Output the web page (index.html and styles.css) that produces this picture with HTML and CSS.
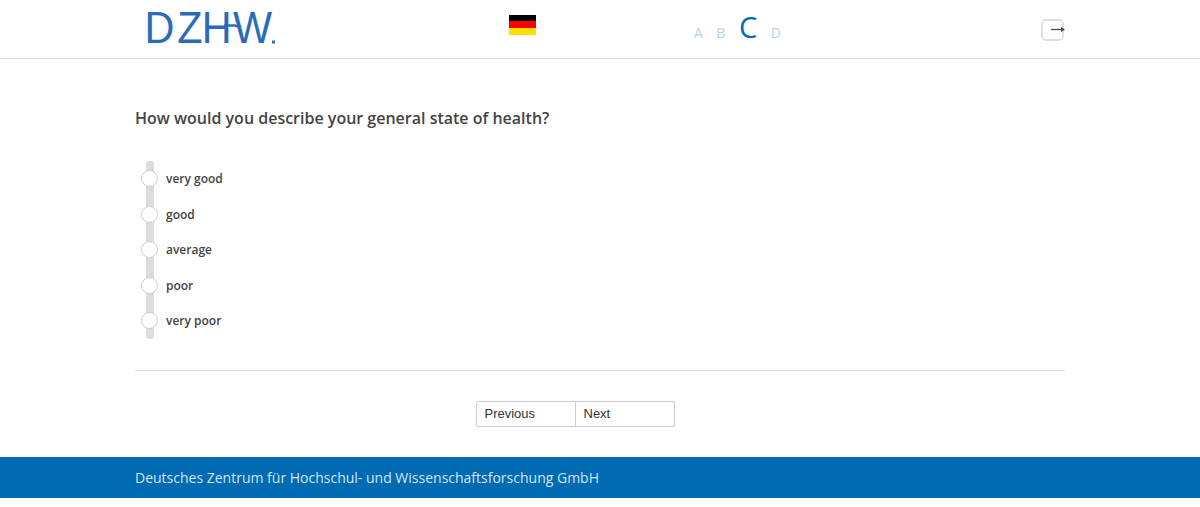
FILE: index.html
```html
<!DOCTYPE html>
<html>
<head>
  <meta charset="UTF-8">
  <title>DZHW</title>
  <link rel="stylesheet" href="styles.css">
</head>
<body>
  <header class="header">
    <div class="header-inner">
      <svg class="logo" width="140" height="58" viewBox="0 0 140 58">
        <text class="logo-text" transform="scale(.92 1)" x="4.8 40.4 67 101" y="43.5">DZHW</text>
        <path d="M84 25.5h11l6 2" fill="none" stroke="#2b6cb8" stroke-width="2.6"/>
        <rect x="132" y="40.5" width="3" height="3" fill="#2b6cb8"/>
      </svg>
      <div class="flag">
        <span class="flag-black"></span>
        <span class="flag-red"></span>
        <span class="flag-gold"></span>
      </div>
      <div class="sizes">
        <span class="size">A</span>
        <span class="size">B</span>
        <span class="size size-active">C</span>
        <span class="size">D</span>
      </div>
      <svg class="logout" width="26" height="22" viewBox="0 0 26 22">
        <rect x="3" y="1" width="21" height="20" rx="4" fill="none" stroke="#d4d4d4" stroke-width="1.4"/>
        <path d="M12 10.5h11" stroke="#444" stroke-width="1.2"/>
        <path d="M22 8l4 2.5-4 2.5z" fill="#444"/>
      </svg>
    </div>
  </header>

  <main class="content">
    <h1 class="question">How would you describe your general state of health?</h1>
    <div class="answers">
      <div class="track"></div>
      <label class="answer"><span class="radio"></span>very good</label>
      <label class="answer"><span class="radio"></span>good</label>
      <label class="answer"><span class="radio"></span>average</label>
      <label class="answer"><span class="radio"></span>poor</label>
      <label class="answer"><span class="radio"></span>very poor</label>
    </div>
    <div class="buttons">
      <button class="btn btn-prev" type="button">Previous</button>
      <button class="btn btn-next" type="button">Next</button>
    </div>
  </main>

  <footer class="footer">
    <div class="footer-inner">Deutsches Zentrum für Hochschul- und Wissenschaftsforschung GmbH</div>
  </footer>
</body>
</html>
```

FILE: styles.css
```css
body {
  margin: 0;
  background-color: #fff;
  color: #444;
  font-family: "Open Sans", sans-serif;
}

.header {
  height: 58px;
  border-bottom: 1px solid #ddd;
}

.header-inner {
  width: 930px;
  height: 58px;
  margin: 0 auto;
  display: flex;
  align-items: flex-start;
}

.logo {
  margin-left: 5px;
  flex: none;
}

.logo-text {
  font-family: "Liberation Sans", sans-serif;
  font-size: 45px;
  fill: #2b6cb8;
}

.flag {
  width: 27px;
  margin: 15px 0 0 229px;
  flex: none;
}

.flag span {
  display: block;
  height: 7px;
}

.flag .flag-black {
  height: 6px;
  background-color: #000;
}

.flag-red {
  background-color: #f00;
}

.flag-gold {
  background-color: #ffdf00;
}

.sizes {
  display: flex;
  align-items: baseline;
  gap: 13.5px;
  margin: 8px 0 0 158px;
  font-size: 14px;
  line-height: 38px;
  color: #b3d3ec;
  flex: none;
}

.size-active {
  font-size: 29px;
  color: #006ab3;
}

.logout {
  margin: 19px 0 0 auto;
  flex: none;
}

.content {
  width: 930px;
  margin: 0 auto;
}

.question {
  margin: 0;
  padding-top: 49px;
  font-size: 16px;
  line-height: 20px;
  font-weight: 600;
  color: #444;
}

.answers {
  position: relative;
  margin-top: 33px;
  height: 178px;
  display: flex;
  flex-direction: column;
  gap: 17.5px;
  padding-top: 8.5px;
  box-sizing: border-box;
}

.track {
  position: absolute;
  left: 11px;
  top: 0;
  bottom: 0;
  width: 8px;
  border-radius: 3px;
  background-color: #ddd;
}

.answer {
  position: relative;
  display: flex;
  align-items: center;
  height: 18px;
  font-size: 12px;
  font-weight: 600;
  color: #444;
}

.radio {
  width: 15px;
  height: 15px;
  margin: 0 8px 0 6px;
  border: 1px solid #ccc;
  border-radius: 50%;
  background-color: #fff;
  flex: none;
}

.buttons {
  margin-top: 31px;
  padding: 30px 50px 30px 0;
  border-top: 1px solid #ddd;
  display: flex;
  justify-content: center;
}

.btn {
  width: 100px;
  height: 26px;
  padding: 0 0 2px 8px;
  border: 1px solid #ccc;
  background-color: #fff;
  color: #333;
  font-family: "Liberation Sans", sans-serif;
  font-size: 13px;
  text-align: left;
}

.btn-prev {
  border-radius: 2px 0 0 2px;
}

.btn-next {
  margin-left: -1px;
  border-radius: 0 2px 2px 0;
}

.footer {
  height: 41px;
  background-color: #006ab3;
}

.footer-inner {
  width: 930px;
  margin: 0 auto;
  font-size: 14px;
  line-height: 41px;
  color: #d5e6f3;
}
```
